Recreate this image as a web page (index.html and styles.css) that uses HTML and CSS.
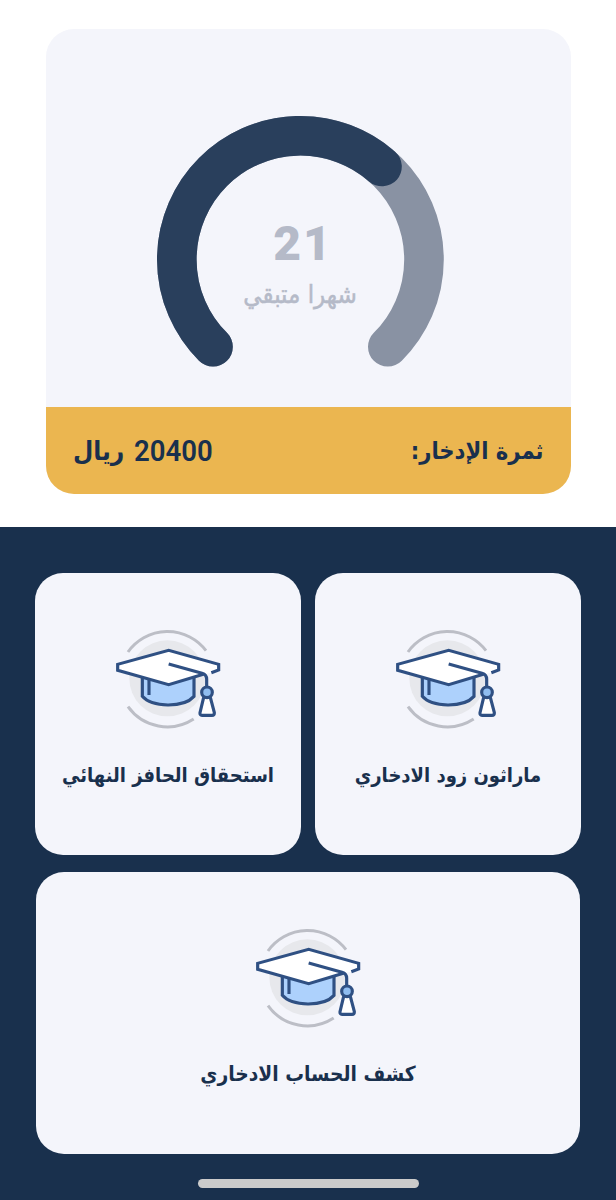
FILE: index.html
```
<!DOCTYPE html>
<html lang="ar" dir="rtl">
<head>
	<meta charset="UTF-8">
	<title>الادخار</title>
	<link rel="stylesheet" href="styles.css">
</head>
<body>
	<svg class="defs">
		<symbol id="cap" viewBox="0 0 360 360">
			<circle cx="172" cy="175" r="114" fill="#e7e8ec"/>
			<path d="M54 96A145 145 0 0 1 288 92M54 260A145 145 0 0 0 251 297" fill="none" stroke="#bcbec6" stroke-width="9"/>
			<g stroke="#2f5083" stroke-width="9.5" fill="none">
				<path d="M97 165V229C126 263 221 264 252 229V165Z" fill="#add1fc"/>
				<path d="M117 176V225"/>
				<path d="M304 158L326 150V133L176 91L23 133V151L176 194L280 163" fill="#fff"/>
				<path d="M176 132L276 160Q290 164 290 178V202"/>
				<path d="M281 232L270 278Q269 286 276 286H306Q314 286 313 278L301 232" fill="#fff"/>
				<circle cx="291" cy="217" r="16" fill="#8fbdf0"/>
			</g>
		</symbol>
	</svg>
	<div class="top">
		<div class="saving">
			<div class="gauge">
				<svg viewBox="0 0 288 252">
					<circle class="track" cx="143.4" cy="144.4" r="123.6" pathLength="360" transform="rotate(135 143.4 144.4)"/>
					<circle class="value" cx="143.4" cy="144.4" r="123.6" pathLength="360" transform="rotate(135 143.4 144.4)"/>
				</svg>
				<div class="left">
					<b>21</b>
					<span>شهرا متبقي</span>
				</div>
			</div>
			<div class="total">
				<span class="name">ثمرة الإدخار:</span>
				<span class="sum"><span class="num">20400</span><span class="cur">ريال</span></span>
			</div>
		</div>
	</div>
	<div class="menu">
		<a class="item"><svg><use href="#cap"/></svg><span>ماراثون زود الادخاري</span></a>
		<a class="item"><svg><use href="#cap"/></svg><span>استحقاق الحافز النهائي</span></a>
		<a class="item wide"><svg><use href="#cap"/></svg><span>كشف الحساب الادخاري</span></a>
		<div class="home"></div>
	</div>
</body>
</html>
```
FILE: styles.css
```
*{box-sizing:border-box;}
body{margin:0;width:616px;height:1200px;overflow:hidden;background:#fff;color:#19304d;font-family:"DejaVu Sans Condensed","DejaVu Sans",sans-serif;}
.defs{display:block;width:0;height:0;}
.top{height:526.5px;padding:28.5px 45.5px 0 46px;}
.saving{height:465px;border-radius:28px;overflow:hidden;background:#f4f5fb;}
.gauge{position:relative;height:378px;padding-top:86px;direction:ltr;}
.gauge svg{display:block;width:288px;height:252px;margin-left:111px;overflow:visible;}
.gauge circle{fill:none;stroke-width:39.6;stroke-linecap:round;}
.track{stroke:#8992a3;stroke-dasharray:270 90;}
.value{stroke:#293f5c;stroke-dasharray:176.3 183.7;}
.left{position:absolute;top:190px;left:154px;width:200px;text-align:center;color:#b5bac8;}
.left b{display:block;height:50px;padding-left:6px;font:900 48px/50px Roboto,sans-serif;letter-spacing:2px;}
.left span{display:block;direction:rtl;font-size:25.6px;line-height:51px;white-space:nowrap;-webkit-text-stroke:.5px #b5bac8;}
.total{display:flex;justify-content:space-between;height:87px;padding:0 27px;background:#ebb650;font-weight:bold;line-height:89px;white-space:nowrap;}
.name{font-size:23.5px;}
.sum{display:flex;}
.num{font:600 29px/89px Roboto,sans-serif;transform:scaleX(.95);}
.cur{margin-right:8px;font-size:26px;}
.menu{display:flex;flex-wrap:wrap;align-content:flex-start;justify-content:center;gap:16.5px 13.5px;height:673.5px;padding-top:46px;background:#19304d;}
.item{display:flex;flex-direction:column;align-items:center;width:266.5px;height:282.5px;padding-top:47.5px;border-radius:28px;background:#f4f5fb;font-weight:bold;font-size:20px;line-height:40px;white-space:nowrap;}
.item svg{flex:none;width:120px;height:120px;margin-bottom:15px;transform:translateX(2px);}
.wide{width:544.5px;font-size:20.8px;}
.home{width:221px;height:9px;margin-top:8px;border-radius:5px;background:#cbcbcb;}
```
